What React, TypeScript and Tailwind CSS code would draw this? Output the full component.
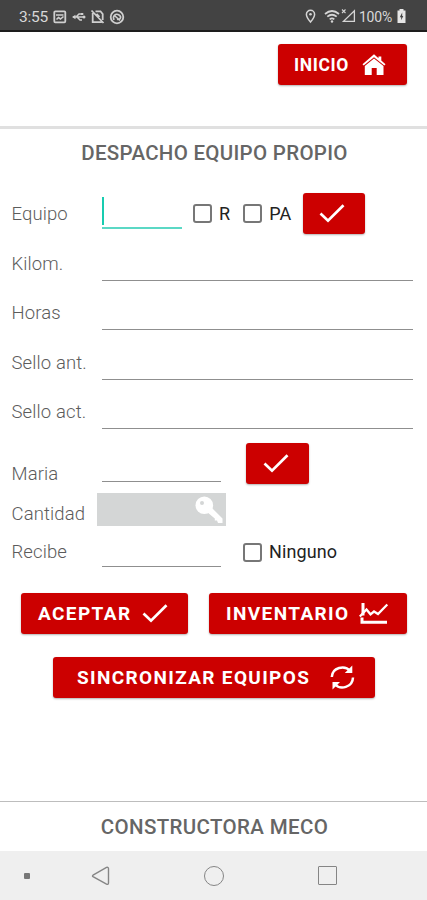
import type { ReactNode } from "react";
import clsx from "clsx";

interface ButtonProps {
  className?: string;
  children: ReactNode;
}

const RedButton = ({ className, children }: ButtonProps) => (
  <button
    className={clsx(
      "flex h-[41px] shrink-0 items-center rounded-[3px] bg-[#cc0000] text-white shadow-[0_1px_2px_rgba(0,0,0,0.3)]",
      className
    )}
  >
    {children}
  </button>
);

const Label = ({ children, className }: { children: ReactNode; className?: string }) => (
  <span
    className={clsx(
      "-ml-[0.5px] w-[90.5px] shrink-0 whitespace-nowrap text-[18.5px] leading-[22px] font-light tracking-[0.12px] text-[#5c5c5c]",
      className
    )}
  >
    {children}
  </span>
);

const Checkbox = ({ label }: { label: string }) => (
  <label className="flex items-center gap-[7px] text-[18px] leading-[22px] tracking-[0.1px] text-[#222]">
    <span className="h-[19px] w-[19px] rounded-[3px] border-2 border-[#777]" />
    {label}
  </label>
);

const CheckIcon = () => (
  <svg width="26" height="20" viewBox="0 0 26 20" fill="none" stroke="#fff" strokeWidth="2.7">
    <path d="M1.5 9.5 L9 16.7 L24.5 1.2" />
  </svg>
);

const HomeIcon = () => (
  <svg width="24" height="22" viewBox="0 0 24 22" fill="#fff">
    <path d="M12 0.3 L16.5 4.2 V2.6 H19.3 V6.6 L23.5 10.2 L22.3 11.5 L12 3.2 L1.7 11.5 L0.5 10.2 Z" />
    <path d="M12 4.5 L21.5 12 V21 H14.7 V14 H9.7 V21 H2.8 V12 Z" />
  </svg>
);

const ChartIcon = () => (
  <svg width="30" height="23" viewBox="0 0 30 23" fill="none" stroke="#fff">
    <path d="M4 1 V13.5 M3 15.5 V20.3 H28" strokeWidth="3" />
    <path d="M0.8 14.5 L7.5 7.5 L11.5 12.3 L15 9.5 L19 12 L28.3 2.5" strokeWidth="2.3" />
  </svg>
);

const SyncIcon = () => (
  <svg width="25" height="25" viewBox="0 0 25 25">
    <g fill="none" stroke="#fff" strokeWidth="2.5">
      <path d="M1.8 12 C2.2 2.5 14.5 -0.6 20.3 6" />
      <path d="M23 12.5 C22.6 22.4 10.5 25.5 4.6 19" />
    </g>
    <path d="M22.3 0.5 V8 H14.8 Z M2.5 24.5 V17 H10 Z" fill="#fff" />
  </svg>
);

const KeyIcon = () => (
  <svg width="28" height="28" viewBox="0 0 28 28">
    <circle cx="9.3" cy="9.3" r="8.8" fill="#fff" />
    <path d="M12 16 L16.5 11.5 L27.5 22.5 V27 H23 L22 24.5 H19.8 V22.5 Z" fill="#fff" />
    <circle cx="7" cy="7" r="2" fill="#d4d6d6" />
  </svg>
);

const StatusBar = () => (
  <div className="flex h-8 items-center border-b-2 border-[#1d1d1d] bg-[#434343] pr-[21px] pl-[19px] text-[#d8d8d8]">
    <span className="w-[34px] pt-[3px] text-[15.5px] leading-5 tracking-[-0.2px]">3:55</span>
    <svg className="mt-[3px]" width="72" height="16" viewBox="0 0 72 16" fill="none" stroke="#cfcfcf" strokeWidth="1.8">
      <rect x="1.3" y="2.3" width="11" height="11" rx="1" />
      <path d="M3 6 H10.5 M3.5 10.5 L5.5 8.5 L7.5 10 L10.5 7.5" strokeWidth="1.6" />
      <path d="M20 8 H32 M23 8 L26 5 H28 M24 8 L27 11 H29" strokeWidth="1.5" />
      <path d="M19 8 L22.5 5.8 V10.2 Z M28 4 H30.3 V6 H28 Z" fill="#cfcfcf" stroke="none" />
      <circle cx="31" cy="8" r="1.5" fill="#cfcfcf" stroke="none" />
      <path d="M42.5 2.3 H47.5 L49.7 5 V11 M39.7 4 V13.2 H48.8 M38.5 1.5 L50.5 14 M43.5 5 L46.5 8" />
      <circle cx="64" cy="8" r="6.3" />
      <path d="M61 11 C59 6.5 63 4 66 6 S67.5 11 64 10.2 M62 7 L67 11.5" strokeWidth="1.6" />
    </svg>
    <svg className="mt-[2px] ml-auto" width="51" height="16" viewBox="0 0 51 16" fill="none" stroke="#d5d5d5">
      <path d="M5.5 14 C3 11 1.4 8.9 1.4 6.4 A4.1 4.2 0 0 1 9.6 6.4 C9.6 8.9 8 11 5.5 14 Z" strokeWidth="1.5" />
      <circle cx="5.5" cy="6.3" r="1.3" fill="#d5d5d5" stroke="none" />
      <path d="M20 6 Q27 0 34 6 M22.3 8.7 Q27 4.8 31.7 8.7 M24.7 11.3 Q27 9.4 29.3 11.3" strokeWidth="1.7" />
      <circle cx="27" cy="13.5" r="1.2" fill="#d5d5d5" stroke="none" />
      <path d="M49.4 2.8 V13.3 H38.5 Z" strokeWidth="1.3" />
      <path d="M37 1.5 L40.5 5 M40.5 1.5 L37 5" strokeWidth="1.1" />
    </svg>
    <span className="ml-[3px] pt-[3px] text-[14px] leading-5 tracking-[-0.2px]">100%</span>
    <svg className="mt-[2px] ml-[5px]" width="9" height="14" viewBox="0 0 9 14">
      <path d="M2.5 0 H6.5 V1.5 H8.5 V14 H0.5 V1.5 H2.5 Z" fill="#e6e6e6" />
      <path d="M5.2 3.5 L2.8 8.2 H4.2 V11.3 L6.3 7 H5.2 Z" fill="#434343" />
    </svg>
  </div>
);

const Line = ({ className }: { className: string }) => (
  <div className={clsx("h-[41px] border-b border-[#8f8f8f]", className)} />
);

const fields = ["Kilom.", "Horas", "Sello ant.", "Sello act."];

export default function App() {
  return (
    <div className="flex h-[900px] w-[427px] flex-col overflow-hidden bg-white font-['Roboto',sans-serif]">
      <StatusBar />

      <header className="flex h-[97px] justify-end border-b-[3px] border-[#e0e0e0] pt-3 pr-5">
        <RedButton className="w-[129px] justify-between pr-[21px] pl-[16px]">
          <span className="pt-px text-[17.5px] font-bold tracking-[0.6px]">INICIO</span>
          <HomeIcon />
        </RedButton>
      </header>

      <main className="flex h-[673px] flex-col border-b border-[#bdbdbd]">
        <h1 className="h-[58px] pt-3 pl-[2px] text-center text-[20.5px] leading-6 font-medium tracking-[0.3px] text-[#666]">
          DESPACHO EQUIPO PROPIO
        </h1>

        <div className="flex h-[53px] items-center pl-3">
          <Label>Equipo</Label>
          <div className="mb-[3px] h-[33px] w-[80px] border-b-2 border-[#5bd8c5]">
            <div className="mt-px h-[28px] w-[2px] bg-[#18ccb0]" />
          </div>
          <div className="ml-[11px] flex gap-[13px]">
            <Checkbox label="R" />
            <Checkbox label="PA" />
          </div>
          <RedButton className="ml-[12px] w-[62px] justify-center pr-[4px]">
            <CheckIcon />
          </RedButton>
        </div>

        {fields.map((field) => (
          <div key={field} className="flex h-[49.3px] shrink-0 pl-3">
            <Label className="pt-[13px]">{field}</Label>
            <Line className="w-[311px]" />
          </div>
        ))}

        <div className="flex h-[56px] shrink-0 pl-3">
          <Label className="pt-[26px]">Maria</Label>
          <Line className="mt-[4px] w-[119px]" />
          <RedButton className="mt-[6px] ml-[25px] w-[63px] justify-center pr-[4px]">
            <CheckIcon />
          </RedButton>
        </div>

        <div className="flex h-[33px] shrink-0 pl-3">
          <Label className="pt-[10px]">Cantidad</Label>
          <div className="-ml-[5px] flex w-[129px] items-center justify-end bg-[#d4d6d6] pr-[3px]">
            <KeyIcon />
          </div>
        </div>

        <div className="flex h-[67px] shrink-0 pl-3">
          <Label className="pt-[15px]">Recibe</Label>
          <Line className="w-[119px]" />
          <div className="mt-[15px] ml-[22px]">
            <Checkbox label="Ninguno" />
          </div>
        </div>

        <div className="flex gap-[21px] pl-[21px] text-[19px] font-bold tracking-[1.4px]">
          <RedButton className="w-[167px] justify-between pr-[20px] pl-[17px]">
            <span className="pt-[2px]">ACEPTAR</span>
            <CheckIcon />
          </RedButton>
          <RedButton className="w-[198px] justify-between pr-[18px] pl-[17px]">
            <span className="pt-[2px]">INVENTARIO</span>
            <ChartIcon />
          </RedButton>
        </div>

        <div className="mt-[23px] pl-[53px] text-[19px] font-bold tracking-[1.35px]">
          <RedButton className="w-[322px] justify-between pr-[20px] pl-[24px]">
            <span className="pt-[2px]">SINCRONIZAR EQUIPOS</span>
            <SyncIcon />
          </RedButton>
        </div>
      </main>

      <footer className="flex h-[49px] items-center justify-center pt-[2px] pl-[2px] text-[20.5px] font-medium tracking-[0.35px] text-[#666]">
        CONSTRUCTORA MECO
      </footer>

      <nav className="flex h-[49px] items-center bg-[#efefef]">
        <div className="ml-6 h-[6px] w-[6px] rounded-[1px] bg-[#777]" />
        <svg className="ml-[61px]" width="20" height="20" viewBox="0 0 20 20" fill="none" stroke="#858585" strokeWidth="1.4">
          <path d="M2 9.2 L15.5 1.4 Q17.5 0.8 17.5 2.8 V16.8 Q17.5 19 15.5 18.2 L2 10.6 Q1 10 2 9.2 Z" />
        </svg>
        <div className="ml-[93px] h-5 w-5 rounded-full border-[1.5px] border-[#858585]" />
        <div className="ml-[94px] h-[19px] w-[19px] rounded-[1px] border-[1.5px] border-[#858585]" />
      </nav>
    </div>
  );
}
